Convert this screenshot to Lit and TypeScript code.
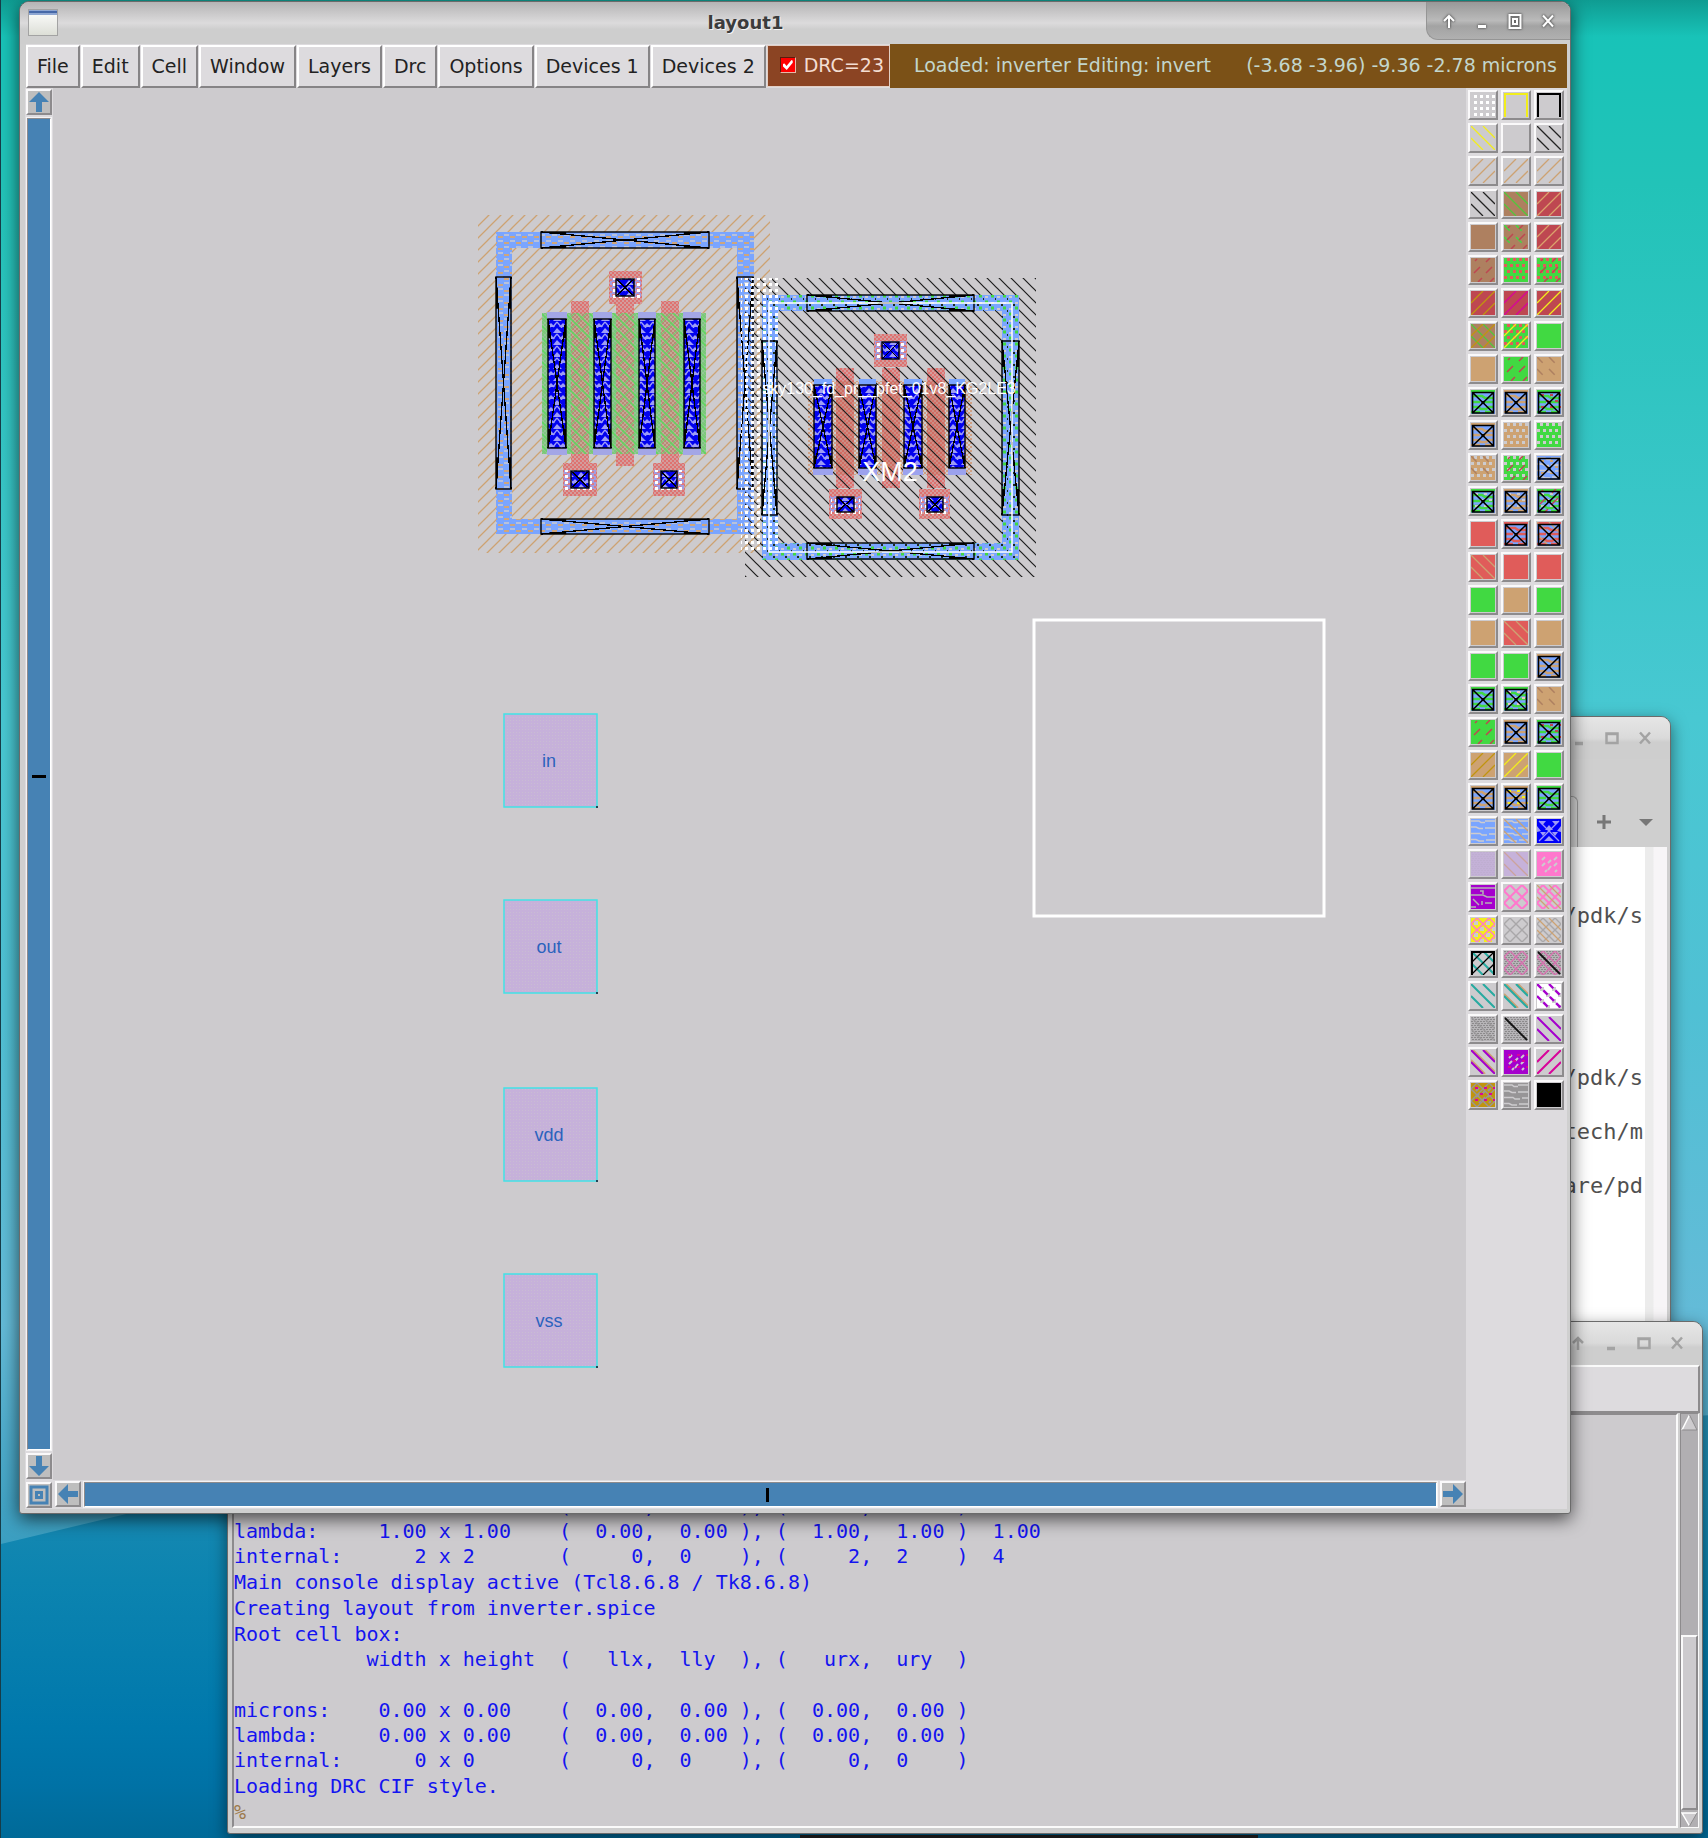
import { LitElement, html, svg, css } from "lit";
import { customElement, property } from "lit/decorators.js";

const TAN = "#cda272";
const BROWN = "#ae8060";
const GREEN = "#41d942";
const CRIMSON = "#be4751";
const RED = "#e05c5a";
const BLUE = "#7aa5ff";
const GREY = "#cdcbce";
const GOLD = "#c0940f";
const YELLOW = "#f2ee1c";
const PINK = "#ff78cd";
const PURPLE = "#a500cd";
const TEAL = "#27aaa0";
const MAGENTA = "#d8049a";
const BLACK = "#000";
const MID = "#979597";

/* Each swatch is a stack of "kind:colour" layers, painted bottom to top. */
const X = (...l: string[]) => [`fill:${BLUE}`, ...l, "xbox"];
const PALETTE: string[][] = [
  ["dots:#fff"], [`frame:${YELLOW}`], [`frame:${BLACK}`],
  [`down:${YELLOW}`], [], [`down:#222`],
  [`up:${TAN}`], [`up:${TAN}`], [`up:${TAN}`],
  ["down:#222"], [`fill:${BROWN}`, "down:#52c63c"], [`fill:${CRIMSON}`, "up:#dba26c"],
  [`fill:${BROWN}`], [`fill:${BROWN}`, `downdash:${GREEN}`, `updash:${CRIMSON}`], [`fill:${CRIMSON}`, "up:#dba26c"],
  [`fill:${BROWN}`, `updash:${CRIMSON}`], [`fill:${GREEN}`, `stagger:${RED}`], [`fill:${GREEN}`, `stagger:${RED}`, `updash:${CRIMSON}`],
  [`fill:${CRIMSON}`, `up:${GOLD}`], [`fill:${CRIMSON}`, `up:${MAGENTA}`], [`fill:${CRIMSON}`, `up:${YELLOW}`],
  [`fill:${BROWN}`, "down:#52c63c", `up:${GOLD}`], [`fill:${GREEN}`, `stagger:${RED}`, `up:${YELLOW}`], [`fill:${GREEN}`],
  [`fill:${TAN}`], [`fill:${GREEN}`, `updash:${CRIMSON}`], [`fill:${TAN}`, `downdash:${BROWN}`],
  X(`wave:${GREEN}`), X(`wave:${TAN}`), X(`wave:${GREEN}`, `specks:${CRIMSON}`),
  X(`wave:${TAN}`), [`fill:${TAN}`, `stagger:${GREY}`], [`fill:${GREEN}`, `stagger:${GREY}`],
  [`fill:${TAN}`, `stagger:${GREY}`, `downdash:${BROWN}`], [`fill:${GREEN}`, `stagger:${GREY}`, `updash:${CRIMSON}`], X(`specks:${TAN}`, `halfwave:${GREY}`),
  X(`wave:${GREEN}`, `specks:${GREY}`), X(`wave:${TAN}`, `specks:${GREY}`), X(`wave:${GREEN}`, `specks:${GREY}`, `updash:${CRIMSON}`),
  [`fill:${RED}`], X(`wave:${RED}`), X(`wave:${RED}`, `down:${TAN}`),
  [`fill:${RED}`, `down:${TAN}`], [`fill:${RED}`], [`fill:${RED}`],
  [`fill:${GREEN}`], [`fill:${TAN}`], [`fill:${GREEN}`],
  [`fill:${TAN}`], [`fill:${RED}`, `down:${TAN}`], [`fill:${TAN}`],
  [`fill:${GREEN}`], [`fill:${GREEN}`], X(`wave:${TAN}`),
  X(`wave:${GREEN}`), X(`wave:${GREEN}`, `specks:#e9c4c8`), [`fill:${TAN}`, `downdash:${BROWN}`],
  [`fill:${GREEN}`, `updash:${CRIMSON}`], X(`wave:${TAN}`), X(`wave:${GREEN}`, `specks:${CRIMSON}`),
  [`fill:${TAN}`, `up:${GOLD}`], [`fill:${TAN}`, `up:${YELLOW}`], [`fill:${GREEN}`],
  X(`wave:${TAN}`), X(`wave:${TAN}`, `specks:${YELLOW}`), X(`wave:${GREEN}`),
  [`fill:${BLUE}`, `halfwave:${GREY}`], [`fill:${BLUE}`, `halfwave:${GREY}`, `down:${TAN}`], ["fill:#0000fa", "tri:#9f9cf6"],
  ["fill:#c6b2da", "check:#bfaed2"], ["fill:#c6b2da", "down:#cba39c"], [`fill:${PINK}`, `flecks:${GREY}`],
  [`fill:${PURPLE}`, "bands:#b4b2b4"], [`diamond:${PINK}`], [`diamond:${PINK}`, `down:${TAN}`],
  [`fill:${YELLOW}`, `patches:${GREY}`, `thin:${PINK}`], ["thin:#a9a7a9"], ["thin:#a9a7a9", `down:${TAN}`],
  [`bolddown:${TEAL}`, "up:#000", "frame:#000"], ["check:#8c8a8c", "thin:#d873b0"], ["check:#8c8a8c", "thin:#d873b0", "single:#111"],
  [`bolddown:${TEAL}`], [`offset:${TAN}`, `bolddown:${TEAL}`], ["fill:#fff", `patches:${GREY}`, `bolddash:${PURPLE}`],
  ["check:#8c8a8c", "down:#9c9a9c"], ["check:#8c8a8c", "single:#111"], [`bolddown:${PURPLE}`],
  [`offset:${TAN}`, `bolddown:${PURPLE}`], [`fill:${PURPLE}`, `flecks:${GREY}`, `specks:${MAGENTA}`], [`boldup:${MAGENTA}`],
  [`fill:${GOLD}`, `thin:${MID}`, `flecks:${MID}`, `specks:${MAGENTA}`], [`fill:${MID}`, `halfwave:${GREY}`], [`fill:${BLACK}`],
];

const DOWN = "M0 0L24 24M12 0L24 12M0 12L12 24";
const UP = "M0 12L12 0M0 24L24 0M12 24L24 12";

function layer(token: string) {
  const [kind, c] = token.split(":");
  const line = (d: string, w: number, dash = "") =>
    svg`<path d=${d} fill="none" stroke=${c} stroke-width=${w} stroke-dasharray=${dash || "none"}></path>`;
  switch (kind) {
    case "fill": return svg`<rect width="24" height="24" fill=${c}></rect>`;
    case "down": return line(DOWN, 1.3);
    case "up": return line(UP, 1.3);
    case "bolddown": return line(DOWN, 2);
    case "boldup": return line(UP, 2);
    case "bolddash": return line(DOWN, 2.4, "6 3");
    case "offset": return line("M2 0L24 22M14 0L24 10M0 10L14 24", 2);
    case "downdash": return line(DOWN, 1.5, "8 9");
    case "updash": return line("M3 15L9 9M15 15L21 9M4 3L6 1M15 4L19 0M7 24L11 20M19 24L23 20", 1.5);
    case "single": return line("M1 1L23 23", 1.8);
    case "frame": return line("M1 24V1H23V24", 2);
    case "diamond": return line("M0 6L6 0L24 18L18 24L0 6M0 18L18 0L24 6L6 24L0 18", 2);
    case "thin": return line("M0 6L6 0L24 18L18 24L0 6M0 18L18 0L24 6L6 24L0 18", 1.4);
    case "dots": return line("M3 3.5H24M3 9.5H24M3 15.5H24M3 21.5H24", 3, "3 3");
    case "stagger": return line("M3 1.5H24M0 7.5H24M3 13.5H24M0 19.5H24", 3, "3 3");
    case "patches": return line("M3 5H24M9 11H24M3 17H24M9 23H24", 4, "4 8");
    case "flecks": return line("M5 8L8 5M5 14L8 11M11 11L14 8M11 18L14 14M17 8L20 5M17 14L20 11M8 20L10 18M18 20L20 18", 2);
    case "bands": return line("M0 3H24M9 6H12V9M0 10H12L16 12H24M2 14L8 20M14 18H21M11 16V20M0 22H5", 1.5);
    case "specks": return line("M4 5H24M9 11H24M4 17H24", 2, "3 6");
    case "check": return svg`<path d="M0 .5H24M0 4.5H24M0 8.5H24M0 12.5H24M0 16.5H24M0 20.5H24" stroke=${c} stroke-width="1" stroke-dasharray="2 1"></path>
      <path d="M1 2.5H24M1 6.5H24M1 10.5H24M1 14.5H24M1 18.5H24M1 22.5H24" stroke=${c} stroke-width="1" stroke-dasharray="2 1"></path>
      <rect width="24" height="24" fill=${c} opacity=".35"></rect>`;
    case "wave": return line("M0 1H24M2 6H11L14 8H22M2 12H9M12 12H22M2 17H7L10 19H15L18 17H22M0 22H9M14 22H22", 2.6);
    case "halfwave": return svg`<path d="M0 2H8L10 3.5H14M14 2H24M0 8H5L8 9.5H12M14 9H24M0 14.5H9L11 16H16M18 15H24M0 20.5H5L8 22H13M15 21H24" fill="none" stroke=${c} stroke-width="1.5"></path>`;
    case "tri": return svg`<path d="M2 2H9L5.5 6ZM15 2H22L18.5 6ZM12 6L16 11H8ZM0 7L4 12L0 13ZM24 7L20 12L24 13ZM3 13H9L6 17ZM15 13H21L18 17ZM12 17L17 22H7Z" fill=${c}></path><path d="M2 2L22 22M22 2L2 22" stroke=${c} stroke-width="1.3"></path>`;
    case "xbox": return svg`<path d="M1.5 2.5H22.5V23H1.5ZM1.5 2.5L22.5 23M22.5 2.5L1.5 23" fill="none" stroke="#000" stroke-width="1.6"></path><rect x="10.5" y="11" width="3" height="3"></rect>`;
    default: return svg``;
  }
}

const MENUS = ["File", "Edit", "Cell", "Window", "Layers", "Drc", "Options", "Devices 1", "Devices 2"];

const CONSOLE: string[] = [
  "microns:    1.00 x 1.00    (  0.00,  0.00 ), (  1.00,  1.00 )  1.00\n" +
  "lambda:     1.00 x 1.00    (  0.00,  0.00 ), (  1.00,  1.00 )  1.00\n" +
  "internal:      2 x 2       (     0,  0    ), (     2,  2    )  4",
  "Main console display active (Tcl8.6.8 / Tk8.6.8)",
  "Creating layout from inverter.spice",
  "Root cell box:\n" +
  "           width x height  (   llx,  lly  ), (   urx,  ury  )\n ",
  "microns:    0.00 x 0.00    (  0.00,  0.00 ), (  0.00,  0.00 )\n" +
  "lambda:     0.00 x 0.00    (  0.00,  0.00 ), (  0.00,  0.00 )\n" +
  "internal:      0 x 0       (     0,  0    ), (     0,  0    )",
  "Loading DRC CIF style.",
];

const TERMINAL = "\n\n/pdk/s\n\n\n\n\n\n/pdk/s\n\ntech/m\n\nare/pd";

const ARROWS: Record<string, string> = {
  up: "M10 0L20 10H13V20H7V10H0Z",
  down: "M10 20L20 10H13V0H7V10H0Z",
  left: "M0 10L10 0V7H20V13H10V20Z",
  right: "M20 10L10 0V7H0V13H10V20Z",
};

type Box = [number, number, number, number];
const rect = (b: Box, fill: string, stroke = "none", sw = 0) =>
  svg`<rect x=${b[0]} y=${b[1]} width=${b[2] - b[0]} height=${b[3] - b[1]} fill=${fill} stroke=${stroke} stroke-width=${sw}></rect>`;

/* A contact cut: outline plus the crossing diagonals, thick near the corners. */
const cut = (b: Box, fill = "none") => {
  const [x1, y1, x2, y2] = b;
  const wide = x2 - x1 > y2 - y1 + 20;
  const tall = y2 - y1 > x2 - x1 + 20;
  const w = x2 - x1, h = y2 - y1;
  const steps = wide
    ? `M${x1 + w * 0.05} ${y1 + 1}h${w * 0.1}M${x1 + w * 0.05} ${y2 - 1}h${w * 0.1}M${x2 - w * 0.05} ${y1 + 1}h${-w * 0.1}M${x2 - w * 0.05} ${y2 - 1}h${-w * 0.1}`
    : tall
      ? `M${x1 + 1} ${y1 + h * 0.05}v${h * 0.1}M${x2 - 1} ${y1 + h * 0.05}v${h * 0.1}M${x1 + 1} ${y2 - h * 0.05}v${-h * 0.1}M${x2 - 1} ${y2 - h * 0.05}v${-h * 0.1}`
      : "";
  return svg`${rect(b, fill, "#000", 1.4)}
    <path d="M${x1} ${y1}L${x2} ${y2}M${x2} ${y1}L${x1} ${y2}" stroke="#000" stroke-width="1.3" shape-rendering="crispEdges"></path>
    <path d=${steps} stroke="#000" stroke-width="2"></path>`;
};

const ring = (o: Box, i: Box, fill: string) =>
  svg`<path fill-rule="evenodd" fill=${fill} d="M${o[0]} ${o[1]}H${o[2]}V${o[3]}H${o[0]}ZM${i[0]} ${i[1]}V${i[3]}H${i[2]}V${i[1]}Z"></path>`;

const pad = (p: Box, c: Box) => svg`
  ${rect(p, "url(#poly)")}
  ${rect([p[0] + 1, p[1] + 7, p[2] - 1, p[3] - 7], "url(#padmetal)")}
  ${rect([c[0] - 6, c[1] - 1, c[2] + 6, c[3] + 2], "url(#dots)")}
  ${cut(c, "url(#metal)")}`;

@customElement("window-controls")
export class WindowControls extends LitElement {
  @property({ type: Boolean }) active = false;
  static styles = css`
    :host { display: block; }
    .row { display: flex; gap: 13px; }
    button { all: unset; display: block; width: 20px; height: 20px; color: #a3a3a3; }
    .active button { color: #fff; filter: drop-shadow(0 0 1px #555) drop-shadow(0 0 1px #777); }
    svg { display: block; }
  `;
  render() {
    const icon = (label: string, d: string) => html`<button type="button" aria-label=${label}>
      <svg width="20" height="20" viewBox="0 0 20 20" fill="none" stroke="currentColor" stroke-width=${this.active ? 2 : 2.5}><path d=${d}></path></svg>
    </button>`;
    return html`<div class="row ${this.active ? "active" : ""}">
      ${icon("Shade", "M10 17V5M5 10L10 5L15 10")}
      ${icon("Minimize", "M6 15H14M6 16H14")}
      ${this.active
        ? icon("Maximize", "M4.5 4H15.5V17H4.5ZM8 8H12V13H8Z")
        : icon("Maximize", "M4.5 5.5H15.5V15H4.5ZM4.5 6H15.5")}
      ${icon("Close", "M5 4.5L15 15.5M15 4.5L5 15.5")}
    </div>`;
  }
}

@customElement("layer-palette")
export class LayerPalette extends LitElement {
  static styles = css`
    :host { display: block; background: #dddbde; padding: 2px; }
    .grid { display: grid; grid-template-columns: repeat(3, 30px); gap: 3px; }
    button {
      appearance: none; box-sizing: border-box; width: 30px; height: 30px; margin: 0; padding: 1px;
      background: #cdcbce; border: 2px solid; border-color: #faf9fa #8d8b8d #8d8b8d #faf9fa;
    }
    svg { display: block; overflow: hidden; }
  `;
  render() {
    return html`<div class="grid">
      ${PALETTE.map((layers, i) => html`<button type="button" aria-label="Layer ${i + 1}">
        <svg width="24" height="24" viewBox="0 0 24 24">${layers.map(layer)}</svg>
      </button>`)}
    </div>`;
  }
}

@customElement("layout-canvas")
export class LayoutCanvas extends LitElement {
  static styles = css`
    :host { display: block; position: relative; overflow: hidden; background: #cdcbce; }
    svg { position: absolute; inset: 0; width: 100%; height: 100%; }
    text { font-family: "Liberation Sans", Arial, sans-serif; text-anchor: middle; }
    .pin { font-size: 18px; fill: #2b62bd; }
    .cell { font-size: 16px; fill: #fff; }
    .inst { font-size: 27px; fill: #fff; }
  `;

  private nfet() {
    const cols: [number, number][] = [[571, 589], [616, 634], [661, 679]];
    const metal: [number, number][] = [[548, 566], [594, 611], [639, 655], [684, 700]];
    return svg`
      ${rect([478, 215, 770, 553], "url(#hatchup)")}
      ${ring([496, 232, 754, 534], [512, 248, 737, 519], "url(#ringtan)")}
      ${cut([541, 232, 709, 248])}${cut([541, 519, 709, 534])}
      ${cut([496, 277, 511, 489])}${cut([737, 277, 753, 489])}
      ${rect([542, 313, 706, 454], "url(#diff)")}
      ${cols.map(([a, b]) => rect([a, 301, b, 466], "url(#poly)"))}
      ${cols.map(([a, b]) => rect([a, 313, b, 454], "url(#gate)"))}
      ${rect([542, 313, 706, 454], "url(#diffline)")}
      ${metal.map(([a, b]) => svg`${rect([a - 1, 312, b + 1, 319], "#a3a6e6")}${rect([a - 1, 448, b + 1, 455], "#a3a6e6")}
        ${cut([a, 319, b, 448], "url(#metal)")}`)}
      ${pad([609, 271, 642, 304], [616, 279, 634, 296])}
      ${pad([563, 463, 597, 496], [571, 471, 589, 488])}
      ${pad([653, 463, 685, 496], [661, 471, 677, 488])}`;
  }

  private pfet() {
    const cols: [number, number][] = [[836, 854], [882, 900], [927, 945]];
    const metal: [number, number][] = [[814, 832], [859, 876], [904, 922], [949, 965]];
    return svg`
      ${rect([808, 381, 972, 475], "url(#pdiff)")}
      ${cols.map(([a, b]) => rect([a, 368, b, 488], "url(#poly)"))}
      ${cols.map(([a, b]) => rect([a, 381, b, 475], "#b0603c40"))}
      ${rect([745, 278, 1036, 577], "url(#hatchdown)")}
      ${ring([762, 295, 1019, 560], [778, 311, 1002, 543], "url(#ringgreen)")}
      ${rect([741, 278, 780, 553], "url(#dots)")}
      ${metal.map(([a, b]) => svg`${rect([a, 379, b, 386], "#7aa5ff")}${rect([a - 1, 468, b + 1, 475], "#9ca2ee")}
        ${cut([a, 385, b, 468], "url(#metal)")}`)}
      ${pad([874, 334, 907, 367], [882, 342, 899, 359])}
      ${pad([829, 489, 862, 519], [837, 497, 854, 512])}
      ${pad([919, 489, 950, 519], [927, 497, 943, 512])}
      ${cut([807, 295, 974, 311])}${cut([807, 543, 974, 559])}
      ${cut([762, 341, 777, 515])}${cut([1002, 341, 1019, 515])}
      <rect x="769" y="303" width="243" height="249" fill="none" stroke="#fff" stroke-width="1.5"></rect>
      <text class="cell" x="889" y="394">sky130_fd_pr__pfet_01v8_KG2LE3</text>
      <text class="inst" x="890" y="481">XM2</text>`;
  }

  render() {
    const pins: [string, number][] = [["in", 714], ["out", 900], ["vdd", 1088], ["vss", 1274]];
    return html`<svg aria-label="Layout drawing">
      <defs>
        <pattern id="hatchup" patternUnits="userSpaceOnUse" width="12" height="12" patternTransform="translate(8 0)">
          <path d="M-1 13L13 -1M-1 1L1 -1M11 13L13 11" stroke="#cda272" stroke-width="1.3"></path>
        </pattern>
        <pattern id="hatchdown" patternUnits="userSpaceOnUse" width="12" height="12" patternTransform="translate(1 0)">
          <path d="M-1 -1L13 13M11 -1L13 1M-1 11L1 13" stroke="#1c1c1c" stroke-width="1.2"></path>
        </pattern>
        <pattern id="ringtan" patternUnits="userSpaceOnUse" width="12" height="12">
          <rect width="12" height="12" fill="#7aa5ff"></rect>
          <path d="M0 3H5M6 9H11" stroke="#cfa67c" stroke-width="2"></path>
          <path d="M6 1H11M0 7H5" stroke="#cdcbce" stroke-width="1.6"></path>
        </pattern>
        <pattern id="ringgreen" patternUnits="userSpaceOnUse" width="12" height="12">
          <rect width="12" height="12" fill="#7aa5ff"></rect>
          <path d="M1 2H4M7 8H10" stroke="#41d942" stroke-width="3"></path>
          <path d="M7 3H10M1 9H4" stroke="#cdcbce" stroke-width="2"></path>
          <path d="M5 5H7M11 11H12" stroke="#1c2c1c" stroke-width="2"></path>
        </pattern>
        <pattern id="poly" patternUnits="userSpaceOnUse" width="4" height="4">
          <rect width="4" height="4" fill="#d49c9c"></rect>
          <path d="M0 0H2V2H0ZM2 2H4V4H2Z" fill="#de7270"></path>
        </pattern>
        <pattern id="diff" patternUnits="userSpaceOnUse" width="4" height="4">
          <rect width="4" height="4" fill="#94c696"></rect>
          <path d="M0 0H2V2H0ZM2 2H4V4H2Z" fill="#7cc87d"></path>
        </pattern>
        <pattern id="pdiff" patternUnits="userSpaceOnUse" width="4" height="4">
          <path d="M0 0H2V2H0ZM2 2H4V4H2Z" fill="#cf9f83"></path>
        </pattern>
        <pattern id="gate" patternUnits="userSpaceOnUse" width="4" height="4">
          <rect width="4" height="4" fill="#c2aa96"></rect>
          <path d="M0 0H2V2H0ZM2 2H4V4H2Z" fill="#bb8774"></path>
        </pattern>
        <pattern id="diffline" patternUnits="userSpaceOnUse" width="12" height="12">
          <path d="M-1 -1L13 13M11 -1L13 1M-1 11L1 13" stroke="#5fd85f" stroke-width="1.5"></path>
          <path d="M-1 13L13 -1" stroke="#78cc70" stroke-width="1.2"></path>
        </pattern>
        <pattern id="metal" patternUnits="userSpaceOnUse" width="12" height="12" patternTransform="translate(5 4)">
          <rect width="12" height="12" fill="#0202ef"></rect>
          <path d="M0 0L5 5H0ZM12 0L8 5H12ZM6 7L10 11H2Z" fill="#9d9cf6"></path>
          <path d="M0 6L5 12M12 6L8 11" stroke="#9d9cf6" stroke-width="1.4"></path>
        </pattern>
        <pattern id="padmetal" patternUnits="userSpaceOnUse" width="6" height="6">
          <rect width="6" height="6" fill="#a29ce0"></rect>
          <path d="M0 1H3M3 4H6" stroke="#e07a80" stroke-width="2"></path>
        </pattern>
        <pattern id="dots" patternUnits="userSpaceOnUse" width="6" height="6">
          <rect x="1" y="1" width="3" height="3" fill="#fff"></rect>
        </pattern>
        <pattern id="pinfill" patternUnits="userSpaceOnUse" width="3" height="3">
          <rect width="3" height="3" fill="#c6b1da"></rect>
          <rect width="1" height="1" fill="#c9bcd3"></rect>
        </pattern>
      </defs>
      <g transform="translate(-53 -88)">
        ${this.nfet()}
        ${this.pfet()}
        <rect x="1034" y="620" width="290" height="296" fill="none" stroke="#fff" stroke-width="3"></rect>
        ${pins.map(([name, y]) => svg`
          <rect x="504" y=${y} width="93" height="93" fill="url(#pinfill)" stroke="#42e2e6" stroke-width="1.5"></rect>
          <rect x="596" y=${y + 92} width="2" height="2" fill="#245"></rect>
          <text class="pin" x="549" y=${y + 53}>${name}</text>`)}
      </g>
    </svg>`;
  }
}

@customElement("app-root")
export class AppRoot extends LitElement {
  static styles = css`
    :host { display: block; }
    * { box-sizing: border-box; }
    .desktop {
      position: relative; overflow: hidden; width: 100%; height: 100vh; min-height: 900px;
      font-family: "DejaVu Sans", sans-serif;
      background:
        linear-gradient(#173c48, #173c48) 0 0 / 1px 100% no-repeat,
        linear-gradient(180deg, #0f9c92 0, #18c3b8 2%, #22c3b8 10%, #48c8d2 39%, #50c0d4 55%, #64bbd8 72%, #3b9ec0 84%);
    }
    .sea {
      position: absolute; inset: 0 0 0 1px; background: linear-gradient(180deg, #2790b4 76%, #0c84b0 86%, #0078ac 94%, #0072a6 97%, #006a98 100%);
      clip-path: polygon(0 84%, 9% 82%, 100% 77%, 100% 100%, 0 100%);
    }
    .dock { position: absolute; left: 800px; bottom: 0; width: 458px; height: 3px; background: #222; }
    .window {
      position: absolute; display: flex; flex-direction: column; overflow: hidden;
      background: #cfcfcf; border: 1px solid #6b6b6b; border-radius: 10px 10px 3px 3px;
      box-shadow: 0 5px 16px rgba(0, 0, 0, .5);
    }
    .titlebar {
      flex: none; display: flex; align-items: center; height: 42px;
      background: linear-gradient(#e6e6e6, #dadada 50%, #cecece 60%);
    }
    .spacer { flex: 1; }

    .terminal { top: 716px; right: 37px; width: 300px; bottom: 400px; }
    .terminal .titlebar { justify-content: flex-end; padding-right: 15px; }
    .tabs { flex: none; display: flex; justify-content: flex-end; align-items: stretch; height: 88px; padding-top: 37px; }
    .tab { width: 190px; border: 1px solid #999; border-bottom: 0; border-radius: 6px 6px 0 0; background: #d6d6d6; }
    .tabtools { display: flex; align-items: center; gap: 26px; width: 92px; padding-left: 18px; color: #777; }
    .tabtools button { all: unset; width: 16px; height: 16px; }
    .tabtools svg { display: block; }
    .screen { flex: 1; display: flex; min-height: 0; margin-right: 3px; background: #fff; }
    .screen pre { flex: 1; margin: 0; padding: 1px 2px 0 0; text-align: right; font: 22px/27px "DejaVu Sans Mono", monospace; color: #505050; }
    .gutter { width: 22px; background: linear-gradient(90deg, #ececec 8px, #f7f5f7 9px); }

    .console { left: 227px; right: 5px; top: 1321px; bottom: 4px; }
    .console .titlebar { justify-content: flex-end; padding-right: 15px; }
    .toolbar { flex: none; height: 48px; margin: 1px 2px 0 4px; background: #dddbde; border: 2px solid; border-color: #fafafa #8d8b8d #8d8b8d #fafafa; }
    .conbody { flex: 1; display: flex; min-height: 0; margin: 0 3px 5px 4px; gap: 2px; }
    .log {
      flex: 1; min-width: 0; overflow: hidden; display: flex; flex-direction: column; justify-content: flex-end; gap: 1px;
      background: #cdcbce; border: 2px solid; border-color: #8d8b8d #fafafa #fafafa #8d8b8d; padding: 0 0 1px;
    }
    .log pre { flex: none; margin: 0; font: 20px/25px "DejaVu Sans Mono", monospace; color: #1414f0; }
    .log .prompt { color: #9c7a4c; }
    .vscroll { width: 19px; display: flex; flex-direction: column; background: #b1afb2; border: 1px solid; border-color: #8d8b8d #fafafa #fafafa #8d8b8d; }
    .vscroll svg { display: block; flex: none; }
    .vthumb { height: 175px; margin-bottom: 2px; background: #cdcbce; border: 2px solid; border-color: #fafafa #8d8b8d #8d8b8d #fafafa; }

    .main { left: 19px; right: 137px; top: 1px; bottom: 324px; padding-bottom: 4px; box-shadow: 0 5px 18px rgba(0, 0, 0, .65); }
    .main .titlebar { align-items: flex-start; background: linear-gradient(#b5b4b5, #dcdbdc 50%, #cecece 65%); }
    .appicon { display: block; flex: none; margin: 7px 0 0 8px; }
    .title { flex: 1; margin: 0; padding-left: 7px; text-align: center; font-size: 18px; line-height: 42px; font-weight: 700; color: #3c3c3c; text-shadow: 1px 1px 0 #f4f4f4; }
    .knob { height: 38px; padding: 9px 12px 0; background: linear-gradient(#989898, #bababa 50%, #a3a3a3 65%, #b0b0b0); border: 1px solid #959595; border-top: 0; border-right: 0; border-radius: 0 0 0 12px; }
    .menubar { flex: none; display: flex; align-items: stretch; gap: 1px; height: 44px; margin: 0 3px 0 6px; background: #dddbde; }
    .menubar > button {
      appearance: none; margin: 1px 0 0; padding: 0 9px 2px; border: 2px solid; border-color: #fff #868486 #868486 #fff;
      background: #dddbde; font: 19px/24px "DejaVu Sans", sans-serif; color: #222;
    }
    .drc { display: flex; align-items: center; gap: 8px; margin: 1px 0; padding: 0 5px 2px 12px; background: #8b4423; border: 1px solid #e3cfc5; color: #f3ddd2; font-size: 19px; line-height: 24px; white-space: nowrap; }
    .drc input { appearance: none; position: relative; width: 16px; height: 16px; margin: 0; background: #f00; border: 1px solid; border-color: #5a1c0c #e8b8a8 #e8b8a8 #5a1c0c; }
    .drc input:checked::after { content: ""; position: absolute; inset: 2px; background: #fff; clip-path: polygon(0 40%, 18% 34%, 38% 60%, 88% 0, 100% 8%, 100% 28%, 40% 100%, 0 62%); }
    .status { flex: 1; min-width: 0; display: flex; align-items: center; justify-content: space-between; margin-left: -1px; padding: 0 10px 2px 24px; background: #7b5117; color: #c3d6cc; font-size: 19px; line-height: 24px; white-space: nowrap; }
    .body { flex: 1; min-height: 0; display: grid; grid-template: 1fr 29px / 28px 1fr 101px; margin: 0 3px 0 5px; background: #dddbde; }
    .left { grid-row: 1 / 3; display: flex; flex-direction: column; gap: 2px; padding: 1px; }
    .bottom { grid-column: 2; grid-row: 2; display: flex; gap: 2px; padding: 1px 0 1px 2px; background: #dddbde; }
    .palette { grid-column: 3; grid-row: 1 / 3; }
    .arrow { appearance: none; flex: none; display: block; width: 26px; height: 26px; margin: 0; padding: 1px; background: #bebebe; border: 2px solid; border-color: #faf9fa #8d8b8d #8d8b8d #faf9fa; }
    .arrow svg { display: block; }
    .trough { flex: 1; display: flex; align-items: center; justify-content: center; background: #4682b4; border: 2px solid; border-color: #8d8b8d #fff #fff #8d8b8d; outline: 1px solid #f4f3f4; outline-offset: -1px; }
    .left .trough { padding-bottom: 16px; }
    .bottom .trough { padding-left: 14px; }
    .mark { background: #000; width: 3px; height: 14px; }
    .left .mark { width: 14px; height: 3px; }
    .corner { margin-top: 1px; }
  `;

  private arrow(dir: string) {
    return html`<button class="arrow" type="button" aria-label="Scroll ${dir}">
      <svg width="20" height="20" viewBox="0 0 20 20"><path d=${ARROWS[dir]} fill="#4682b4"></path></svg>
    </button>`;
  }

  render() {
    return html`<div class="desktop">
      <div class="sea"></div>
      <div class="dock"></div>

      <section class="window terminal" aria-label="Terminal">
        <div class="titlebar"><window-controls></window-controls></div>
        <div class="tabs">
          <div class="tab"></div>
          <div class="tabtools">
            <button type="button" aria-label="New tab"><svg width="16" height="16" viewBox="0 0 16 16"><path d="M8 1V15M1 8H15" stroke="#777" stroke-width="3"></path></svg></button>
            <button type="button" aria-label="Tab list"><svg width="16" height="16" viewBox="0 0 16 16"><path d="M1 5H15L8 12Z" fill="#777"></path></svg></button>
          </div>
        </div>
        <div class="screen"><pre>${TERMINAL}</pre><div class="gutter"></div></div>
      </section>

      <section class="window console" aria-label="Console">
        <div class="titlebar"><window-controls></window-controls></div>
        <div class="toolbar"></div>
        <div class="conbody">
          <div class="log">
            ${CONSOLE.map((block) => html`<pre>${block}</pre>`)}
            <pre class="prompt">%</pre>
          </div>
          <div class="vscroll">
            <svg width="17" height="17" viewBox="0 0 17 17"><path d="M8.5 1L16 16H1Z" fill="#cdcbce"></path><path d="M1 16L8.5 1" stroke="#fff" stroke-width="1.5"></path><path d="M1 16H16L8.5 1" fill="none" stroke="#8d8b8d"></path></svg>
            <div class="spacer"></div>
            <div class="vthumb"></div>
            <svg width="17" height="15" viewBox="0 0 17 15"><path d="M1 1H16L8.5 14Z" fill="#cdcbce"></path><path d="M16 1H1L8.5 14" fill="none" stroke="#fff" stroke-width="1.5"></path><path d="M16 1L8.5 14" stroke="#8d8b8d"></path></svg>
          </div>
        </div>
      </section>

      <section class="window main" aria-label="layout1">
        <div class="titlebar">
          <svg class="appicon" width="30" height="27" viewBox="0 0 30 27">
            <defs><linearGradient id="sheet" x1="0" y1="0" x2="0" y2="1"><stop offset="0" stop-color="#fff"></stop><stop offset="1" stop-color="#dcded6"></stop></linearGradient></defs>
            <rect x=".5" y=".5" width="29" height="26" fill="url(#sheet)" stroke="#a3a3a3"></rect>
            <rect x="1" y="1" width="28" height="5" fill="#8ea6d2"></rect><rect x="1" y="2" width="28" height="2" fill="#4668a8"></rect>
          </svg>
          <h1 class="title">layout1</h1>
          <div class="knob"><window-controls active></window-controls></div>
        </div>
        <nav class="menubar">
          ${MENUS.map((m) => html`<button type="button">${m}</button>`)}
          <label class="drc"><input type="checkbox" checked>DRC=23</label>
          <div class="status">
            <span>Loaded: inverter Editing: invert</span>
            <span>(-3.68 -3.96) -9.36 -2.78 microns</span>
          </div>
        </nav>
        <div class="body">
          <div class="left">
            ${this.arrow("up")}
            <div class="trough"><div class="mark"></div></div>
            ${this.arrow("down")}
            <button class="arrow corner" type="button" aria-label="Zoom to fit">
              <svg width="20" height="20" viewBox="0 0 20 20" fill="none" stroke="#4682b4" stroke-width="3"><rect x="2" y="2" width="16" height="16"></rect><rect x="7.5" y="7.5" width="5" height="5"></rect></svg>
            </button>
          </div>
          <layout-canvas></layout-canvas>
          <div class="bottom">
            ${this.arrow("left")}
            <div class="trough"><div class="mark"></div></div>
            ${this.arrow("right")}
          </div>
          <layer-palette class="palette"></layer-palette>
        </div>
      </section>
    </div>`;
  }
}
